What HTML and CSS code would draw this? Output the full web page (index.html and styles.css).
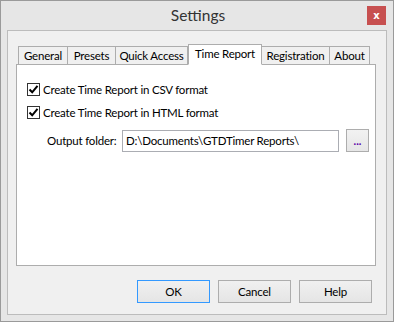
FILE: index.html
```html
<!DOCTYPE html>
<html lang="en">
<head>
  <meta charset="UTF-8">
  <title>Settings</title>
  <link rel="stylesheet" href="styles.css">
</head>
<body>
  <div class="window">
    <div class="titlebar">
      <span class="title">Settings</span>
      <button class="close-btn">x</button>
    </div>

    <div class="client">
      <div class="tabs">
        <div class="tab tab-general">General</div>
        <div class="tab tab-presets">Presets</div>
        <div class="tab tab-quick">Quick Access</div>
        <div class="tab tab-report active">Time Report</div>
        <div class="tab tab-registration">Registration</div>
        <div class="tab tab-about">About</div>
      </div>

      <div class="panel">
        <label class="check-row">
          <span class="checkbox"><svg width="11" height="11" viewBox="0 0 11 11"><path d="M1.5 5.5 L4.2 8.3 L9.5 1.8" fill="none" stroke="#000" stroke-width="2"/></svg></span>
          Create Time Report in CSV format
        </label>
        <label class="check-row">
          <span class="checkbox"><svg width="11" height="11" viewBox="0 0 11 11"><path d="M1.5 5.5 L4.2 8.3 L9.5 1.8" fill="none" stroke="#000" stroke-width="2"/></svg></span>
          Create Time Report in HTML format
        </label>

        <div class="folder-row">
          <span class="folder-label">Output folder:</span>
          <input class="folder-input" type="text" value="D:\Documents\GTDTimer Reports\">
          <button class="browse-btn">...</button>
        </div>
      </div>

      <div class="actions">
        <button class="btn btn-default">OK</button>
        <button class="btn">Cancel</button>
        <button class="btn">Help</button>
      </div>
    </div>
  </div>
</body>
</html>
```

FILE: styles.css
```css
:root {
  --frame: #e6e6e6;
  --face: #f0f0f0;
  --line: #adadad;
  --text: #000;
}

* {
  box-sizing: border-box;
  margin: 0;
  padding: 0;
}

body {
  font-family: 'Lato', 'Noto Sans', sans-serif;
  font-size: 11.5px;
  letter-spacing: -0.2px;
  color: var(--text);
  background: var(--frame);
}

.window {
  width: 394px;
  height: 322px;
  border: 1px solid #9a9a9a;
  background: var(--frame);
  display: flex;
  flex-direction: column;
}

.titlebar {
  height: 29px;
  position: relative;
  display: flex;
  align-items: center;
  justify-content: center;
}

.title {
  font-size: 15.5px;
  letter-spacing: 0;
  color: #333;
  margin-left: 2px;
  margin-top: -1px;
}

.close-btn {
  position: absolute;
  top: 5px;
  right: 7px;
  width: 19px;
  height: 19px;
  border: none;
  background: #c75050;
  color: #fff;
  font-family: 'DejaVu Sans', sans-serif;
  font-weight: bold;
  font-size: 10px;
  line-height: 17px;
}

.client {
  margin: 0 6px 6px 6px;
  height: 285px;
  border: 1px solid #bcbcbc;
  background: var(--face);
  padding: 13px 10px 0 8px;
}

.tabs {
  display: flex;
  align-items: flex-end;
  height: 21px;
  margin-left: 2px;
  margin-bottom: -1px;
  position: relative;
  z-index: 1;
}

.tab {
  height: 19px;
  border: 1px solid var(--line);
  background: var(--face);
  text-align: center;
  line-height: 18px;
  margin-left: -1px;
  white-space: nowrap;
}

.tab-general { width: 50px; margin-left: 0; }
.tab-presets { width: 49px; }
.tab-quick { width: 73px; }
.tab-report { width: 74px; margin-left: 0; }
.tab-registration { width: 69px; }
.tab-about { width: 41px; }

.tab.active {
  height: 21px;
  background: #fff;
  border-bottom-color: #fff;
  line-height: 17px;
  position: relative;
  z-index: 2;
}

.panel {
  width: 360px;
  height: 202px;
  background: #fff;
  border: 1px solid var(--line);
  padding: 18px 0 0 10px;
}

.check-row {
  display: flex;
  align-items: center;
  height: 13px;
  margin-bottom: 10px;
  gap: 3px;
  white-space: nowrap;
}

.checkbox {
  width: 13px;
  height: 13px;
  border: 1px solid #333;
  display: flex;
  align-items: center;
  justify-content: center;
  background: #fff;
}

.folder-row {
  display: flex;
  align-items: center;
  margin-top: 10px;
  padding-left: 20px;
}

.folder-label {
  width: 75px;
  white-space: nowrap;
}

.folder-input {
  width: 217px;
  height: 22px;
  border: 1px solid #abadb3;
  font-family: inherit;
  font-size: 11.5px;
  letter-spacing: -0.2px;
  padding: 0 3px;
  color: var(--text);
  outline: none;
}

.browse-btn {
  width: 23px;
  height: 23px;
  margin-left: 7px;
  border: 1px solid var(--line);
  background: linear-gradient(#f2f2f2, #e6e6e6);
  color: #5a00a8;
  font-family: inherit;
  font-weight: bold;
  font-size: 11px;
  line-height: 18px;
}

.actions {
  display: flex;
  justify-content: flex-end;
  gap: 8px;
  margin-top: 14px;
  padding-right: 4px;
}

.btn {
  width: 73px;
  height: 23px;
  border: 1px solid var(--line);
  background: linear-gradient(#f0f0f0, #e5e5e5);
  font-family: inherit;
  font-size: 11.5px;
  letter-spacing: -0.2px;
  color: var(--text);
}

.btn-default {
  border-color: #3399ff;
}
```
